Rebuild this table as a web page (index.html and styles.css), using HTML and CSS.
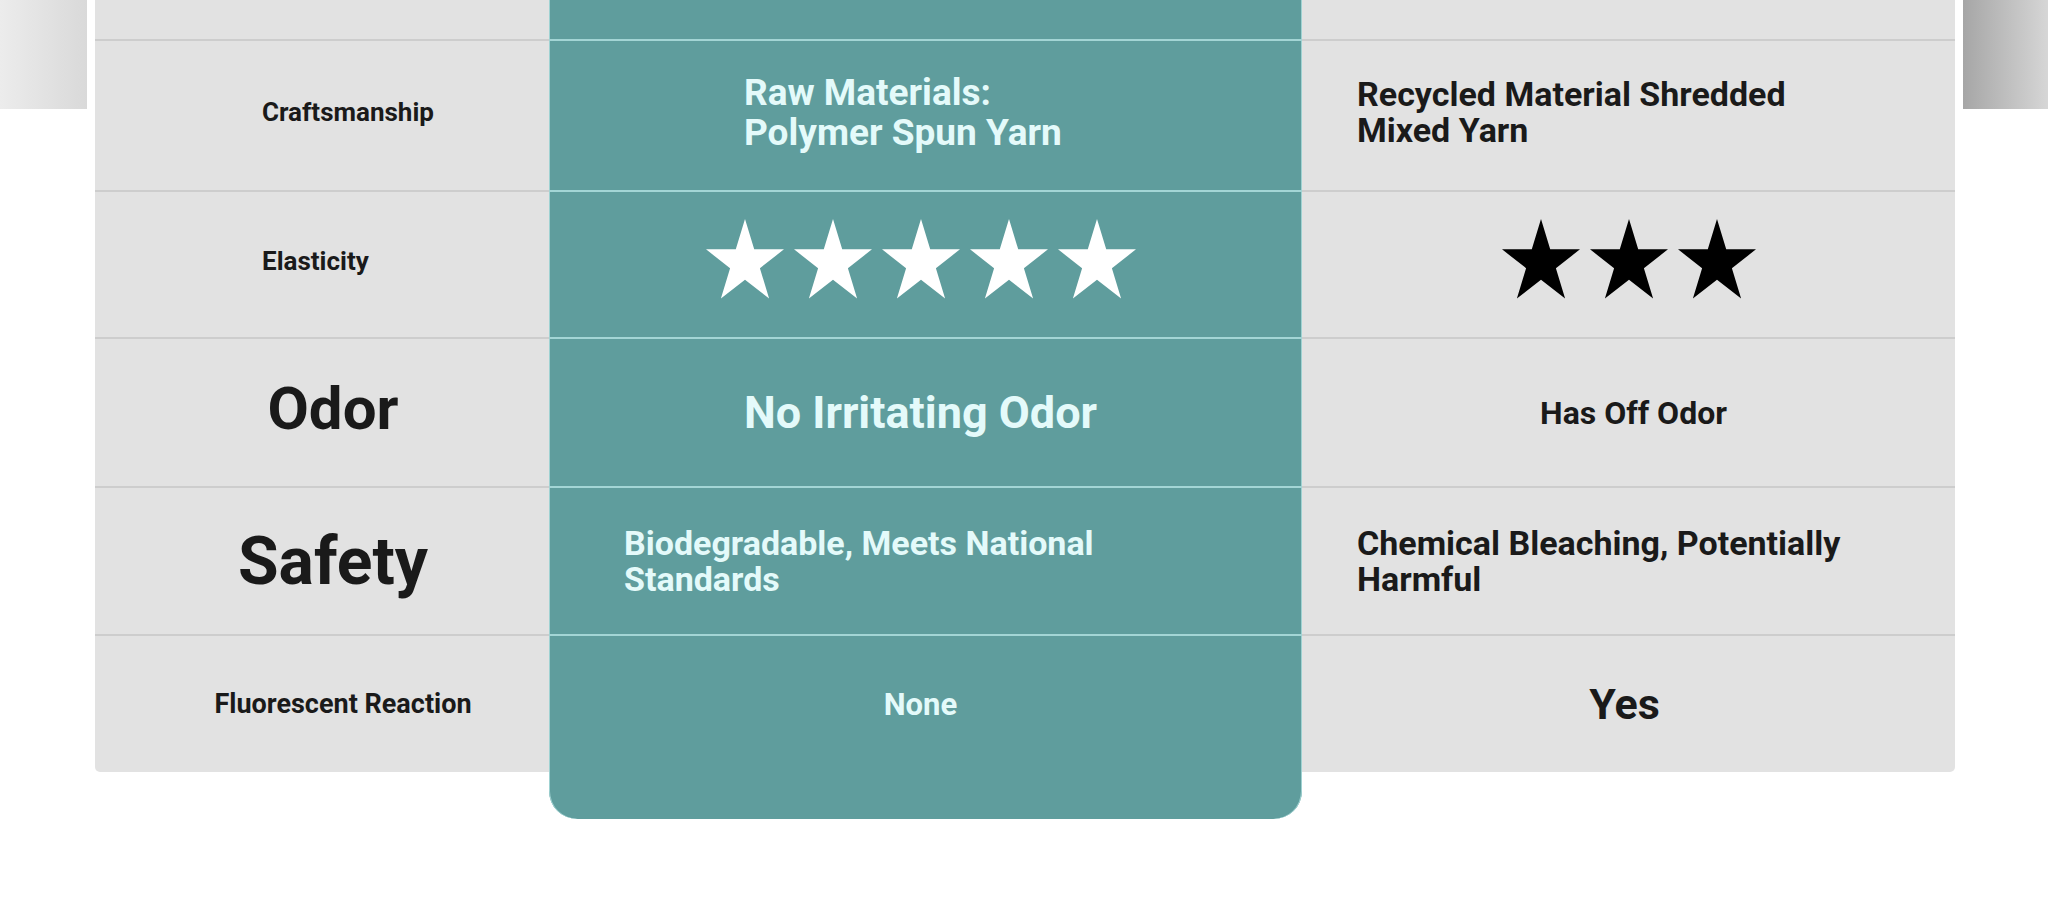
FILE: index.html
```html
<!DOCTYPE html>
<html lang="en">
<head>
    <meta charset="UTF-8">
    <meta name="viewport" content="width=device-width, initial-scale=1.0">
    <title>Yarn Comparison</title>
    <link rel="stylesheet" href="styles.css">
</head>
<body>
    <!-- shared star shape -->
    <svg class="defs" width="0" height="0" aria-hidden="true">
        <symbol id="star" viewBox="0 0 100 91" preserveAspectRatio="none">
            <polygon points="50,0 61.23,34.55 97.55,34.55 68.17,55.9 79.39,90.45 50,69.1 20.61,90.45 31.83,55.9 2.45,34.55 38.77,34.55"/>
        </symbol>
    </svg>

    <div class="page">
        <div class="side side-left"></div>

        <div class="compare">
            <!-- tail of the row above -->
            <div class="cell label"></div>
            <div class="cell ours"></div>
            <div class="cell theirs"></div>

            <div class="cell label label-start"><span class="txt-sm lift">Craftsmanship</span></div>
            <div class="cell ours ours-start-wide"><span class="txt-yarn">Raw Materials:<br>Polymer Spun Yarn</span></div>
            <div class="cell theirs theirs-start"><span class="txt-md lift">Recycled Material Shredded<br>Mixed Yarn</span></div>

            <div class="cell label label-start"><span class="txt-sm lift">Elasticity</span></div>
            <div class="cell ours">
                <div class="stars stars-white">
                    <svg><use href="#star"/></svg>
                    <svg><use href="#star"/></svg>
                    <svg><use href="#star"/></svg>
                    <svg><use href="#star"/></svg>
                    <svg><use href="#star"/></svg>
                </div>
            </div>
            <div class="cell theirs">
                <div class="stars stars-black">
                    <svg><use href="#star"/></svg>
                    <svg><use href="#star"/></svg>
                    <svg><use href="#star"/></svg>
                </div>
            </div>

            <div class="cell label"><span class="txt-xl lift">Odor</span></div>
            <div class="cell ours"><span class="txt-lg">No Irritating Odor</span></div>
            <div class="cell theirs theirs-nudge"><span class="txt-odor">Has Off Odor</span></div>

            <div class="cell label"><span class="txt-xxl">Safety</span></div>
            <div class="cell ours ours-start"><span class="txt-md">Biodegradable, Meets National<br>Standards</span></div>
            <div class="cell theirs theirs-start"><span class="txt-md">Chemical Bleaching, Potentially<br>Harmful</span></div>

            <div class="cell label last-left label-wide"><span class="txt-fluo">Fluorescent Reaction</span></div>
            <div class="cell ours last-mid"><span class="txt-none">None</span></div>
            <div class="cell theirs last-right"><span class="txt-yes">Yes</span></div>

            <div class="cell ours ours-foot"></div>
        </div>

        <div class="side side-right"></div>
    </div>
</body>
</html>
```

FILE: styles.css
```css
body {
    margin: 0;
    padding: 0;
    background-color: #fff;
    font-family: Roboto, "Liberation Sans", Arial, sans-serif;
    font-weight: 700;
    overflow: hidden;
}

.defs {
    position: absolute;
}

.page {
    display: flex;
    align-items: flex-start;
    gap: 8px;
}

/* bits of the neighbouring slides */
.side {
    height: 109px;
}

.side-left {
    width: 87px;
    background: linear-gradient(to right, #ececec, #d9d9d9);
}

.side-right {
    width: 85px;
    background: linear-gradient(to right, #a6a6a6, #d6d6d6);
}

.compare {
    width: 1860px;
    display: grid;
    grid-template-columns: 454px 753px 653px;
    grid-template-rows: 41px 151px 147px 149px 148px 136px 47px;
}

.cell {
    display: flex;
    align-items: center;
    justify-content: center;
    box-sizing: border-box;
    border-bottom: 2px solid #cdcdcd;
}

.label,
.theirs {
    background-color: #e2e2e2;
    color: #1a1a1a;
}

.label {
    padding-left: 22px;
}

.label-start {
    justify-content: flex-start;
    padding-left: 167px;
}

.label-wide {
    padding-left: 42px;
}

.ours {
    background-color: #5f9d9d;
    color: #e4fafa;
    border-bottom-color: #a3d5d5;
    box-shadow: inset 1px 0 #9fd2d2, inset -1px 0 #9fd2d2;
    padding-right: 10px;
}

.ours-start {
    justify-content: flex-start;
    padding-left: 75px;
}

.ours-start-wide {
    justify-content: flex-start;
    padding-left: 195px;
}

.theirs-start {
    justify-content: flex-start;
    padding-left: 55px;
}

.theirs-nudge {
    padding-left: 10px;
}

.last-left,
.last-mid,
.last-right {
    border-bottom: none;
}

.last-left {
    border-bottom-left-radius: 5px;
}

.last-right {
    border-bottom-right-radius: 5px;
    padding-right: 8px;
}

.ours-foot {
    grid-column: 2;
    border-bottom: none;
    border-bottom-left-radius: 28px;
    border-bottom-right-radius: 28px;
}

.lift {
    margin-top: -8px;
}

.txt-sm {
    font-size: 26px;
}

.txt-fluo {
    font-size: 27px;
}

.txt-md {
    font-size: 34px;
    line-height: 36px;
}

.txt-yarn {
    font-size: 37px;
    line-height: 40px;
    margin-top: -6px;
}

.txt-odor {
    font-size: 32px;
}

.txt-none {
    font-size: 31px;
}

.txt-yes {
    font-size: 43px;
}

.txt-lg {
    font-size: 45px;
}

.txt-xl {
    font-size: 60px;
}

.txt-xxl {
    font-size: 66px;
}

.stars {
    display: flex;
    gap: 6px;
    margin-top: -12px;
}

.stars svg {
    width: 82px;
    height: 80px;
}

.stars-white {
    fill: #fff;
}

.stars-black {
    fill: #000;
}
```
